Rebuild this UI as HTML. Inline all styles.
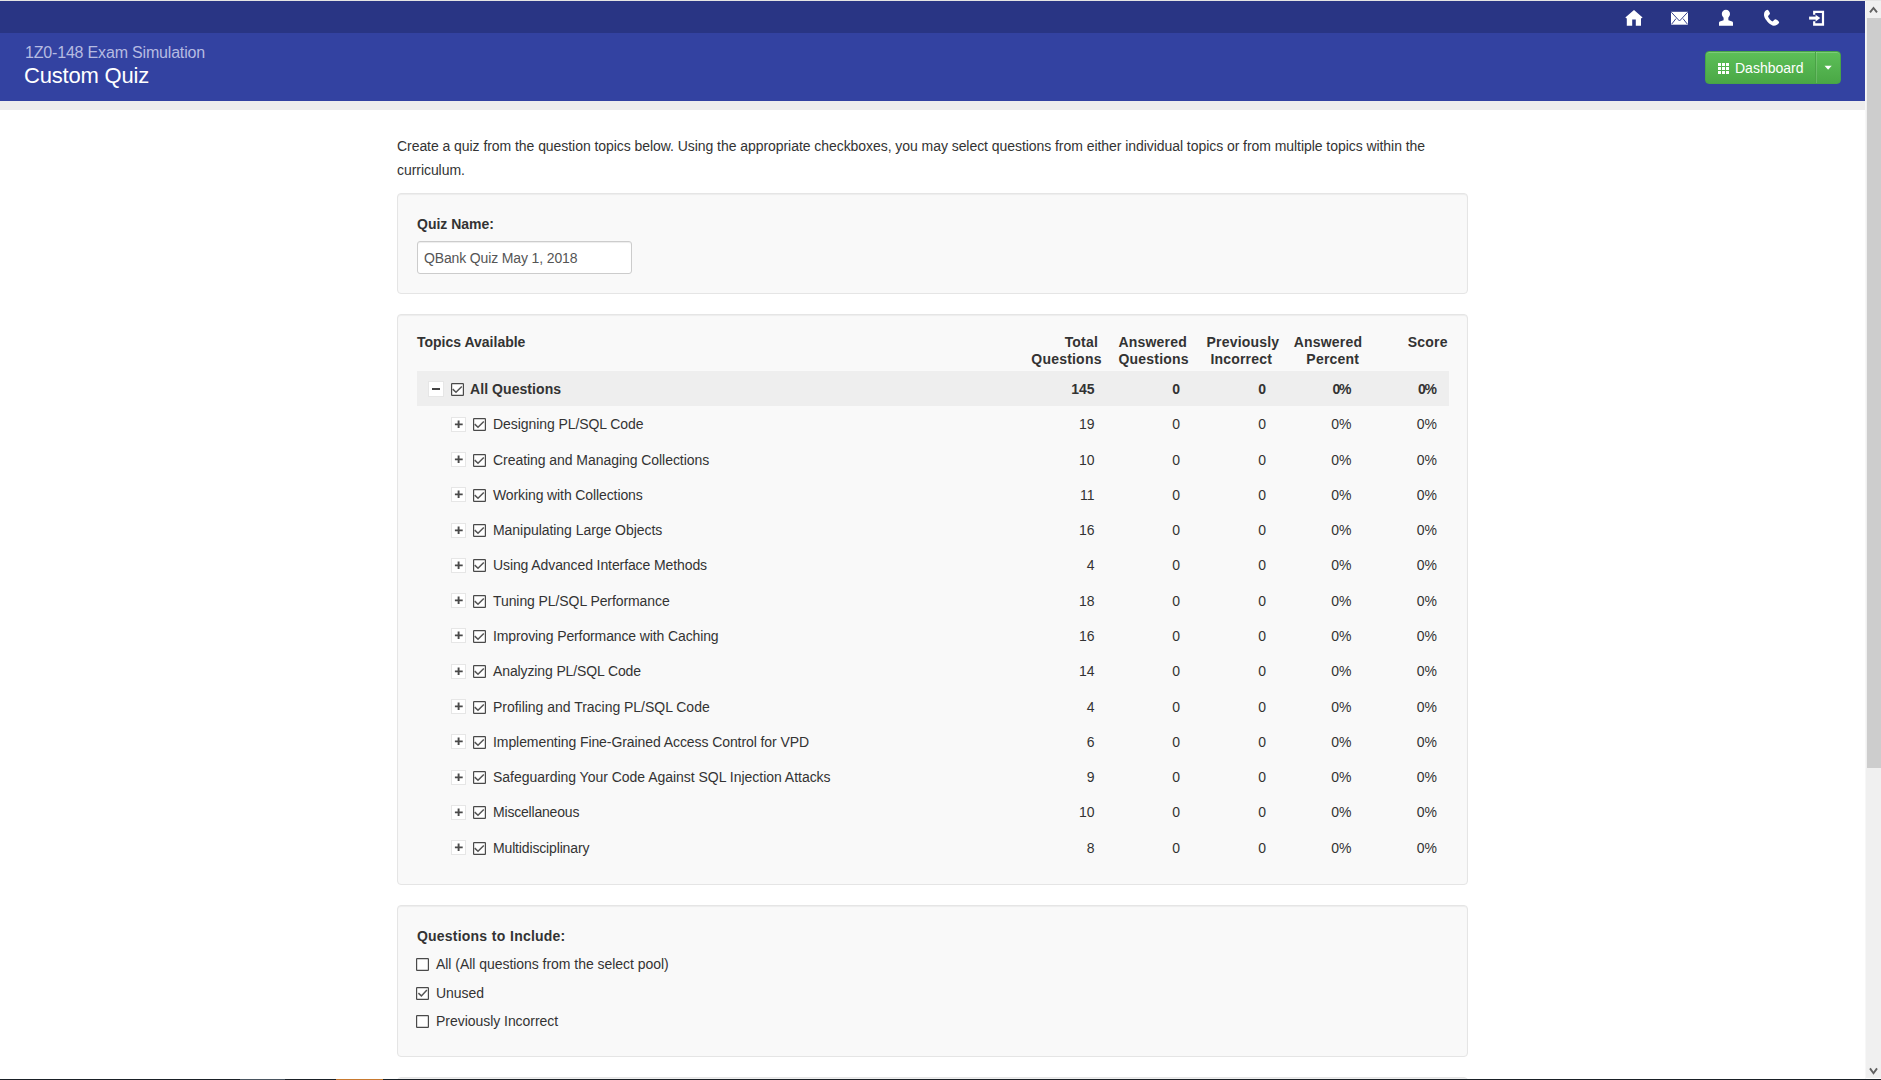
<!DOCTYPE html>
<html><head><meta charset="utf-8"><title>Custom Quiz</title>
<style>
html,body{margin:0;padding:0;}
body{width:1881px;height:1080px;overflow:hidden;position:relative;background:#fff;font-family:"Liberation Sans", sans-serif;}
.t{position:absolute;white-space:nowrap;line-height:normal;}
.well{position:absolute;left:397px;width:1069px;background:#f9f9f9;border:1px solid #e5e5e5;border-radius:4px;box-shadow:inset 0 1px 1px rgba(0,0,0,.05);}
.tog{position:absolute;background:#fff;border:1px solid #e6e6e6;}
svg{display:block}
</style></head><body>
<div style="position:absolute;left:0;top:0;width:1881px;height:1px;background:#e4e4e4"></div>
<div style="position:absolute;left:0;top:1px;width:1865px;height:32px;background:#293584"></div>
<div style="position:absolute;left:0;top:33px;width:1865px;height:68px;background:#3342a1"></div>
<div style="position:absolute;left:0;top:101px;width:1865px;height:9px;background:#ededed"></div>
<div class="t" style="left:25px;top:44px;font-size:16px;color:#b6bbe1;letter-spacing:-0.18px">1Z0-148 Exam Simulation</div>
<div class="t" style="left:24px;top:63px;font-size:22px;color:#fff;letter-spacing:-0.2px">Custom Quiz</div>

<svg style="position:absolute;left:0;top:0" width="1865" height="33">
 <g fill="#fff">
  <path d="M1625.3 17.4 L1634 10 L1642.6 17.4 L1641 18.4 L1641 25.8 L1635.8 25.8 L1635.8 19.4 L1632.2 19.4 L1632.2 25.8 L1626.8 25.8 L1626.8 18.4 Z"/>
  <rect x="1671" y="11.8" width="17" height="12.9"/>
 </g>
 <g fill="none" stroke="#3a4592" stroke-width="1">
  <path d="M1671.3 12.2 L1679.5 21 L1687.7 12.2"/>
  <path d="M1671.5 24.3 L1676 18.6 M1687.5 24.3 L1683 18.6"/>
 </g>
 <g fill="#fff">
  <ellipse cx="1725.9" cy="14" rx="4.1" ry="4.2"/>
  <path d="M1723.6 17 L1728.3 17 L1728.4 20.2 L1732.2 21.6 Q1733 22 1733 23 L1733 25.7 L1719 25.7 L1719 23 Q1719 22 1719.8 21.6 L1723.6 20.2 Z"/>
 </g>
 <path fill="#fff" d="M1767.3 9.7 C1768.5 10 1769.8 12.2 1770 13.6 C1769.6 14.6 1768.6 15.5 1768 16.2 C1768.6 18 1770.5 20.5 1772.4 21.6 C1773.3 20.8 1774.5 19.6 1775.5 19.3 C1777 19.6 1779 21.2 1779.2 22.4 C1778.5 24 1776 25.8 1773.8 25.8 C1770.5 25.4 1766.5 21.5 1764.6 17.6 C1763.6 15 1763.9 12.5 1765.2 11 C1765.9 10.3 1766.6 9.7 1767.3 9.7 Z"/>
 <g fill="#fff">
  <rect x="1809.1" y="16.6" width="7" height="3"/>
  <path d="M1815.6 14.8 L1820.3 18.1 L1815.6 21.4 Z"/>
  <path d="M1813.1 10.8 L1824.1 10.8 L1824.1 25.7 L1813.1 25.7 L1813.1 21.3 L1815.3 21.3 L1815.3 23.3 L1821.9 23.3 L1821.9 13.1 L1815.3 13.1 L1815.3 14.7 L1813.1 14.7 Z"/>
 </g>
</svg>
<div style="position:absolute;left:1705px;top:51px;width:134px;height:31px;border:1px solid #47a447;border-radius:4px;background:linear-gradient(#5dbf58,#4aa846);box-shadow:inset 0 1px 0 rgba(255,255,255,.2)"></div>
<div style="position:absolute;left:1815px;top:52px;width:1px;height:31px;background:#4aa246"></div>
<div style="position:absolute;left:1816px;top:52px;width:1px;height:31px;background:rgba(255,255,255,.15)"></div>
<svg style="position:absolute;left:1718px;top:63px" width="11" height="11"><g fill="#fff">
<rect x="0" y="0" width="3" height="3"/><rect x="4" y="0" width="3" height="3"/><rect x="8" y="0" width="3" height="3"/>
<rect x="0" y="4" width="3" height="3"/><rect x="4" y="4" width="3" height="3"/><rect x="8" y="4" width="3" height="3"/>
<rect x="0" y="8" width="3" height="3"/><rect x="4" y="8" width="3" height="3"/><rect x="8" y="8" width="3" height="3"/>
</g></svg>
<svg style="position:absolute;left:1824px;top:65px" width="9" height="6"><path d="M0.5 0.8 L7.7 0.8 L4.1 4.8 Z" fill="#fff"/></svg>
<div class="t" style="left:1735px;top:60px;font-size:14px;color:#fff;">Dashboard</div>
<div style="position:absolute;left:1865px;top:1px;width:1px;height:1078px;background:#f7f7f7"></div>
<div style="position:absolute;left:1866px;top:1px;width:15px;height:1077px;background:#f0f0f0"></div>
<div style="position:absolute;left:1867px;top:18px;width:14px;height:750px;background:#cdcdcd"></div>
<svg style="position:absolute;left:1866px;top:1px" width="15" height="1078">
 <path d="M4 11.4 L7.5 7 L11 11.4" fill="none" stroke="#606060" stroke-width="1.9"/>
 <path d="M4 1067.4 L7.5 1072.2 L11 1067.4" fill="none" stroke="#606060" stroke-width="1.9"/>
</svg>
<div class="t" style="white-space:normal;letter-spacing:-0.055px;left:397px;top:134px;width:1071px;font-size:14px;line-height:24px;color:#333">Create a quiz from the question topics below. Using the appropriate checkboxes, you may select questions from either individual topics or from multiple topics within the curriculum.</div>
<div class="well" style="top:193px;height:99px"></div>
<div class="t" style="left:417px;top:216px;font-size:14px;font-weight:bold;color:#333;">Quiz Name:</div>
<div style="position:absolute;left:417px;top:241px;width:213px;height:31px;border:1px solid #ccc;border-radius:3px;background:#fff;box-shadow:inset 0 1px 1px rgba(0,0,0,.075)"></div>
<div class="t" style="left:424px;top:250px;font-size:14px;color:#555;letter-spacing:-0.14px">QBank Quiz May 1, 2018</div>
<div class="well" style="top:314px;height:569px"></div>
<div class="t" style="left:417px;top:334px;font-size:14px;font-weight:bold;color:#333;">Topics Available</div>
<div class="t" style="left:981.3499999999999px;width:200px;text-align:center;top:334px;font-size:14px;font-weight:bold;color:#333;letter-spacing:0.2px">Total</div>
<div class="t" style="left:1052.6499999999999px;width:200px;text-align:center;top:334px;font-size:14px;font-weight:bold;color:#333;letter-spacing:0.2px">Answered</div>
<div class="t" style="left:1142.9499999999998px;width:200px;text-align:center;top:334px;font-size:14px;font-weight:bold;color:#333;letter-spacing:0.2px">Previously</div>
<div class="t" style="left:1227.9499999999998px;width:200px;text-align:center;top:334px;font-size:14px;font-weight:bold;color:#333;letter-spacing:0.2px">Answered</div>
<div class="t" style="left:1327.8px;width:200px;text-align:center;top:334px;font-size:14px;font-weight:bold;color:#333;letter-spacing:0.2px">Score</div>
<div class="t" style="left:966.5px;width:200px;text-align:center;top:351px;font-size:14px;font-weight:bold;color:#333;letter-spacing:0.2px">Questions</div>
<div class="t" style="left:1053.6px;width:200px;text-align:center;top:351px;font-size:14px;font-weight:bold;color:#333;letter-spacing:0.2px">Questions</div>
<div class="t" style="left:1141.25px;width:200px;text-align:center;top:351px;font-size:14px;font-weight:bold;color:#333;letter-spacing:0.2px">Incorrect</div>
<div class="t" style="left:1232.75px;width:200px;text-align:center;top:351px;font-size:14px;font-weight:bold;color:#333;letter-spacing:0.2px">Percent</div>
<div style="position:absolute;left:417px;top:371px;width:1032px;height:35px;background:#eeeeee"></div>
<div class="tog" style="left:428px;top:381px;width:14px;height:14px"><div style="position:absolute;left:3px;top:6px;width:8px;height:2px;background:#444"></div></div>
<div style="position:absolute;left:451px;top:383px"><svg width="13" height="13" viewBox="0 0 13 13"><rect x="0.6" y="0.6" width="11.8" height="11.8" rx="0.5" fill="#fff" stroke="#4a4a4a" stroke-width="1.2"/><path d="M1.7 6.1 L5 9.3 L10.8 3.5" fill="none" stroke="#555" stroke-width="1.5"/></svg></div>
<div class="t" style="left:470px;top:381px;font-size:14px;font-weight:bold;color:#333;letter-spacing:0.07px">All Questions</div>
<div class="t" style="left:894.5px;width:200px;text-align:right;top:381px;font-size:14px;font-weight:bold;color:#333">145</div>
<div class="t" style="left:980px;width:200px;text-align:right;top:381px;font-size:14px;font-weight:bold;color:#333">0</div>
<div class="t" style="left:1066px;width:200px;text-align:right;top:381px;font-size:14px;font-weight:bold;color:#333">0</div>
<div class="t" style="left:1151.5px;width:200px;text-align:right;top:381px;font-size:14px;font-weight:bold;color:#333"><span style="letter-spacing:-1.3px">0</span>%</div>
<div class="t" style="left:1237px;width:200px;text-align:right;top:381px;font-size:14px;font-weight:bold;color:#333"><span style="letter-spacing:-1.3px">0</span>%</div>
<div class="tog" style="left:451px;top:417px;width:13px;height:13px"><svg style="position:absolute;left:0;top:0" width="13" height="13"><path d="M2.9 6.4 H10.7 M6.6 2.4 V9.9" fill="none" stroke="#4a4a4a" stroke-width="1.9"/></svg></div>
<div style="position:absolute;left:473px;top:418px"><svg width="13" height="13" viewBox="0 0 13 13"><rect x="0.6" y="0.6" width="11.8" height="11.8" rx="0.5" fill="#fff" stroke="#4a4a4a" stroke-width="1.2"/><path d="M1.7 6.1 L5 9.3 L10.8 3.5" fill="none" stroke="#555" stroke-width="1.5"/></svg></div>
<div class="t" style="left:493px;top:416px;font-size:14px;color:#333;letter-spacing:-0.075px">Designing PL/SQL Code</div>
<div class="t" style="left:894.5px;width:200px;text-align:right;top:416px;font-size:14px;color:#333">19</div>
<div class="t" style="left:980px;width:200px;text-align:right;top:416px;font-size:14px;color:#333">0</div>
<div class="t" style="left:1066px;width:200px;text-align:right;top:416px;font-size:14px;color:#333">0</div>
<div class="t" style="left:1151.5px;width:200px;text-align:right;top:416px;font-size:14px;color:#333">0%</div>
<div class="t" style="left:1237px;width:200px;text-align:right;top:416px;font-size:14px;color:#333">0%</div>
<div class="tog" style="left:451px;top:452px;width:13px;height:13px"><svg style="position:absolute;left:0;top:0" width="13" height="13"><path d="M2.9 6.4 H10.7 M6.6 2.4 V9.9" fill="none" stroke="#4a4a4a" stroke-width="1.9"/></svg></div>
<div style="position:absolute;left:473px;top:454px"><svg width="13" height="13" viewBox="0 0 13 13"><rect x="0.6" y="0.6" width="11.8" height="11.8" rx="0.5" fill="#fff" stroke="#4a4a4a" stroke-width="1.2"/><path d="M1.7 6.1 L5 9.3 L10.8 3.5" fill="none" stroke="#555" stroke-width="1.5"/></svg></div>
<div class="t" style="left:493px;top:452px;font-size:14px;color:#333;letter-spacing:-0.053px">Creating and Managing Collections</div>
<div class="t" style="left:894.5px;width:200px;text-align:right;top:452px;font-size:14px;color:#333">10</div>
<div class="t" style="left:980px;width:200px;text-align:right;top:452px;font-size:14px;color:#333">0</div>
<div class="t" style="left:1066px;width:200px;text-align:right;top:452px;font-size:14px;color:#333">0</div>
<div class="t" style="left:1151.5px;width:200px;text-align:right;top:452px;font-size:14px;color:#333">0%</div>
<div class="t" style="left:1237px;width:200px;text-align:right;top:452px;font-size:14px;color:#333">0%</div>
<div class="tog" style="left:451px;top:487px;width:13px;height:13px"><svg style="position:absolute;left:0;top:0" width="13" height="13"><path d="M2.9 6.4 H10.7 M6.6 2.4 V9.9" fill="none" stroke="#4a4a4a" stroke-width="1.9"/></svg></div>
<div style="position:absolute;left:473px;top:489px"><svg width="13" height="13" viewBox="0 0 13 13"><rect x="0.6" y="0.6" width="11.8" height="11.8" rx="0.5" fill="#fff" stroke="#4a4a4a" stroke-width="1.2"/><path d="M1.7 6.1 L5 9.3 L10.8 3.5" fill="none" stroke="#555" stroke-width="1.5"/></svg></div>
<div class="t" style="left:493px;top:487px;font-size:14px;color:#333;letter-spacing:-0.109px">Working with Collections</div>
<div class="t" style="left:894.5px;width:200px;text-align:right;top:487px;font-size:14px;color:#333">11</div>
<div class="t" style="left:980px;width:200px;text-align:right;top:487px;font-size:14px;color:#333">0</div>
<div class="t" style="left:1066px;width:200px;text-align:right;top:487px;font-size:14px;color:#333">0</div>
<div class="t" style="left:1151.5px;width:200px;text-align:right;top:487px;font-size:14px;color:#333">0%</div>
<div class="t" style="left:1237px;width:200px;text-align:right;top:487px;font-size:14px;color:#333">0%</div>
<div class="tog" style="left:451px;top:523px;width:13px;height:13px"><svg style="position:absolute;left:0;top:0" width="13" height="13"><path d="M2.9 6.4 H10.7 M6.6 2.4 V9.9" fill="none" stroke="#4a4a4a" stroke-width="1.9"/></svg></div>
<div style="position:absolute;left:473px;top:524px"><svg width="13" height="13" viewBox="0 0 13 13"><rect x="0.6" y="0.6" width="11.8" height="11.8" rx="0.5" fill="#fff" stroke="#4a4a4a" stroke-width="1.2"/><path d="M1.7 6.1 L5 9.3 L10.8 3.5" fill="none" stroke="#555" stroke-width="1.5"/></svg></div>
<div class="t" style="left:493px;top:522px;font-size:14px;color:#333;letter-spacing:-0.048px">Manipulating Large Objects</div>
<div class="t" style="left:894.5px;width:200px;text-align:right;top:522px;font-size:14px;color:#333">16</div>
<div class="t" style="left:980px;width:200px;text-align:right;top:522px;font-size:14px;color:#333">0</div>
<div class="t" style="left:1066px;width:200px;text-align:right;top:522px;font-size:14px;color:#333">0</div>
<div class="t" style="left:1151.5px;width:200px;text-align:right;top:522px;font-size:14px;color:#333">0%</div>
<div class="t" style="left:1237px;width:200px;text-align:right;top:522px;font-size:14px;color:#333">0%</div>
<div class="tog" style="left:451px;top:558px;width:13px;height:13px"><svg style="position:absolute;left:0;top:0" width="13" height="13"><path d="M2.9 6.4 H10.7 M6.6 2.4 V9.9" fill="none" stroke="#4a4a4a" stroke-width="1.9"/></svg></div>
<div style="position:absolute;left:473px;top:559px"><svg width="13" height="13" viewBox="0 0 13 13"><rect x="0.6" y="0.6" width="11.8" height="11.8" rx="0.5" fill="#fff" stroke="#4a4a4a" stroke-width="1.2"/><path d="M1.7 6.1 L5 9.3 L10.8 3.5" fill="none" stroke="#555" stroke-width="1.5"/></svg></div>
<div class="t" style="left:493px;top:557px;font-size:14px;color:#333;letter-spacing:-0.097px">Using Advanced Interface Methods</div>
<div class="t" style="left:894.5px;width:200px;text-align:right;top:557px;font-size:14px;color:#333">4</div>
<div class="t" style="left:980px;width:200px;text-align:right;top:557px;font-size:14px;color:#333">0</div>
<div class="t" style="left:1066px;width:200px;text-align:right;top:557px;font-size:14px;color:#333">0</div>
<div class="t" style="left:1151.5px;width:200px;text-align:right;top:557px;font-size:14px;color:#333">0%</div>
<div class="t" style="left:1237px;width:200px;text-align:right;top:557px;font-size:14px;color:#333">0%</div>
<div class="tog" style="left:451px;top:593px;width:13px;height:13px"><svg style="position:absolute;left:0;top:0" width="13" height="13"><path d="M2.9 6.4 H10.7 M6.6 2.4 V9.9" fill="none" stroke="#4a4a4a" stroke-width="1.9"/></svg></div>
<div style="position:absolute;left:473px;top:595px"><svg width="13" height="13" viewBox="0 0 13 13"><rect x="0.6" y="0.6" width="11.8" height="11.8" rx="0.5" fill="#fff" stroke="#4a4a4a" stroke-width="1.2"/><path d="M1.7 6.1 L5 9.3 L10.8 3.5" fill="none" stroke="#555" stroke-width="1.5"/></svg></div>
<div class="t" style="left:493px;top:593px;font-size:14px;color:#333;letter-spacing:-0.083px">Tuning PL/SQL Performance</div>
<div class="t" style="left:894.5px;width:200px;text-align:right;top:593px;font-size:14px;color:#333">18</div>
<div class="t" style="left:980px;width:200px;text-align:right;top:593px;font-size:14px;color:#333">0</div>
<div class="t" style="left:1066px;width:200px;text-align:right;top:593px;font-size:14px;color:#333">0</div>
<div class="t" style="left:1151.5px;width:200px;text-align:right;top:593px;font-size:14px;color:#333">0%</div>
<div class="t" style="left:1237px;width:200px;text-align:right;top:593px;font-size:14px;color:#333">0%</div>
<div class="tog" style="left:451px;top:628px;width:13px;height:13px"><svg style="position:absolute;left:0;top:0" width="13" height="13"><path d="M2.9 6.4 H10.7 M6.6 2.4 V9.9" fill="none" stroke="#4a4a4a" stroke-width="1.9"/></svg></div>
<div style="position:absolute;left:473px;top:630px"><svg width="13" height="13" viewBox="0 0 13 13"><rect x="0.6" y="0.6" width="11.8" height="11.8" rx="0.5" fill="#fff" stroke="#4a4a4a" stroke-width="1.2"/><path d="M1.7 6.1 L5 9.3 L10.8 3.5" fill="none" stroke="#555" stroke-width="1.5"/></svg></div>
<div class="t" style="left:493px;top:628px;font-size:14px;color:#333;letter-spacing:-0.118px">Improving Performance with Caching</div>
<div class="t" style="left:894.5px;width:200px;text-align:right;top:628px;font-size:14px;color:#333">16</div>
<div class="t" style="left:980px;width:200px;text-align:right;top:628px;font-size:14px;color:#333">0</div>
<div class="t" style="left:1066px;width:200px;text-align:right;top:628px;font-size:14px;color:#333">0</div>
<div class="t" style="left:1151.5px;width:200px;text-align:right;top:628px;font-size:14px;color:#333">0%</div>
<div class="t" style="left:1237px;width:200px;text-align:right;top:628px;font-size:14px;color:#333">0%</div>
<div class="tog" style="left:451px;top:664px;width:13px;height:13px"><svg style="position:absolute;left:0;top:0" width="13" height="13"><path d="M2.9 6.4 H10.7 M6.6 2.4 V9.9" fill="none" stroke="#4a4a4a" stroke-width="1.9"/></svg></div>
<div style="position:absolute;left:473px;top:665px"><svg width="13" height="13" viewBox="0 0 13 13"><rect x="0.6" y="0.6" width="11.8" height="11.8" rx="0.5" fill="#fff" stroke="#4a4a4a" stroke-width="1.2"/><path d="M1.7 6.1 L5 9.3 L10.8 3.5" fill="none" stroke="#555" stroke-width="1.5"/></svg></div>
<div class="t" style="left:493px;top:663px;font-size:14px;color:#333;letter-spacing:-0.12px">Analyzing PL/SQL Code</div>
<div class="t" style="left:894.5px;width:200px;text-align:right;top:663px;font-size:14px;color:#333">14</div>
<div class="t" style="left:980px;width:200px;text-align:right;top:663px;font-size:14px;color:#333">0</div>
<div class="t" style="left:1066px;width:200px;text-align:right;top:663px;font-size:14px;color:#333">0</div>
<div class="t" style="left:1151.5px;width:200px;text-align:right;top:663px;font-size:14px;color:#333">0%</div>
<div class="t" style="left:1237px;width:200px;text-align:right;top:663px;font-size:14px;color:#333">0%</div>
<div class="tog" style="left:451px;top:699px;width:13px;height:13px"><svg style="position:absolute;left:0;top:0" width="13" height="13"><path d="M2.9 6.4 H10.7 M6.6 2.4 V9.9" fill="none" stroke="#4a4a4a" stroke-width="1.9"/></svg></div>
<div style="position:absolute;left:473px;top:701px"><svg width="13" height="13" viewBox="0 0 13 13"><rect x="0.6" y="0.6" width="11.8" height="11.8" rx="0.5" fill="#fff" stroke="#4a4a4a" stroke-width="1.2"/><path d="M1.7 6.1 L5 9.3 L10.8 3.5" fill="none" stroke="#555" stroke-width="1.5"/></svg></div>
<div class="t" style="left:493px;top:699px;font-size:14px;color:#333;letter-spacing:-0.022px">Profiling and Tracing PL/SQL Code</div>
<div class="t" style="left:894.5px;width:200px;text-align:right;top:699px;font-size:14px;color:#333">4</div>
<div class="t" style="left:980px;width:200px;text-align:right;top:699px;font-size:14px;color:#333">0</div>
<div class="t" style="left:1066px;width:200px;text-align:right;top:699px;font-size:14px;color:#333">0</div>
<div class="t" style="left:1151.5px;width:200px;text-align:right;top:699px;font-size:14px;color:#333">0%</div>
<div class="t" style="left:1237px;width:200px;text-align:right;top:699px;font-size:14px;color:#333">0%</div>
<div class="tog" style="left:451px;top:734px;width:13px;height:13px"><svg style="position:absolute;left:0;top:0" width="13" height="13"><path d="M2.9 6.4 H10.7 M6.6 2.4 V9.9" fill="none" stroke="#4a4a4a" stroke-width="1.9"/></svg></div>
<div style="position:absolute;left:473px;top:736px"><svg width="13" height="13" viewBox="0 0 13 13"><rect x="0.6" y="0.6" width="11.8" height="11.8" rx="0.5" fill="#fff" stroke="#4a4a4a" stroke-width="1.2"/><path d="M1.7 6.1 L5 9.3 L10.8 3.5" fill="none" stroke="#555" stroke-width="1.5"/></svg></div>
<div class="t" style="left:493px;top:734px;font-size:14px;color:#333;letter-spacing:-0.079px">Implementing Fine-Grained Access Control for VPD</div>
<div class="t" style="left:894.5px;width:200px;text-align:right;top:734px;font-size:14px;color:#333">6</div>
<div class="t" style="left:980px;width:200px;text-align:right;top:734px;font-size:14px;color:#333">0</div>
<div class="t" style="left:1066px;width:200px;text-align:right;top:734px;font-size:14px;color:#333">0</div>
<div class="t" style="left:1151.5px;width:200px;text-align:right;top:734px;font-size:14px;color:#333">0%</div>
<div class="t" style="left:1237px;width:200px;text-align:right;top:734px;font-size:14px;color:#333">0%</div>
<div class="tog" style="left:451px;top:770px;width:13px;height:13px"><svg style="position:absolute;left:0;top:0" width="13" height="13"><path d="M2.9 6.4 H10.7 M6.6 2.4 V9.9" fill="none" stroke="#4a4a4a" stroke-width="1.9"/></svg></div>
<div style="position:absolute;left:473px;top:771px"><svg width="13" height="13" viewBox="0 0 13 13"><rect x="0.6" y="0.6" width="11.8" height="11.8" rx="0.5" fill="#fff" stroke="#4a4a4a" stroke-width="1.2"/><path d="M1.7 6.1 L5 9.3 L10.8 3.5" fill="none" stroke="#555" stroke-width="1.5"/></svg></div>
<div class="t" style="left:493px;top:769px;font-size:14px;color:#333;letter-spacing:-0.024px">Safeguarding Your Code Against SQL Injection Attacks</div>
<div class="t" style="left:894.5px;width:200px;text-align:right;top:769px;font-size:14px;color:#333">9</div>
<div class="t" style="left:980px;width:200px;text-align:right;top:769px;font-size:14px;color:#333">0</div>
<div class="t" style="left:1066px;width:200px;text-align:right;top:769px;font-size:14px;color:#333">0</div>
<div class="t" style="left:1151.5px;width:200px;text-align:right;top:769px;font-size:14px;color:#333">0%</div>
<div class="t" style="left:1237px;width:200px;text-align:right;top:769px;font-size:14px;color:#333">0%</div>
<div class="tog" style="left:451px;top:805px;width:13px;height:13px"><svg style="position:absolute;left:0;top:0" width="13" height="13"><path d="M2.9 6.4 H10.7 M6.6 2.4 V9.9" fill="none" stroke="#4a4a4a" stroke-width="1.9"/></svg></div>
<div style="position:absolute;left:473px;top:806px"><svg width="13" height="13" viewBox="0 0 13 13"><rect x="0.6" y="0.6" width="11.8" height="11.8" rx="0.5" fill="#fff" stroke="#4a4a4a" stroke-width="1.2"/><path d="M1.7 6.1 L5 9.3 L10.8 3.5" fill="none" stroke="#555" stroke-width="1.5"/></svg></div>
<div class="t" style="left:493px;top:804px;font-size:14px;color:#333;letter-spacing:-0.192px">Miscellaneous</div>
<div class="t" style="left:894.5px;width:200px;text-align:right;top:804px;font-size:14px;color:#333">10</div>
<div class="t" style="left:980px;width:200px;text-align:right;top:804px;font-size:14px;color:#333">0</div>
<div class="t" style="left:1066px;width:200px;text-align:right;top:804px;font-size:14px;color:#333">0</div>
<div class="t" style="left:1151.5px;width:200px;text-align:right;top:804px;font-size:14px;color:#333">0%</div>
<div class="t" style="left:1237px;width:200px;text-align:right;top:804px;font-size:14px;color:#333">0%</div>
<div class="tog" style="left:451px;top:840px;width:13px;height:13px"><svg style="position:absolute;left:0;top:0" width="13" height="13"><path d="M2.9 6.4 H10.7 M6.6 2.4 V9.9" fill="none" stroke="#4a4a4a" stroke-width="1.9"/></svg></div>
<div style="position:absolute;left:473px;top:842px"><svg width="13" height="13" viewBox="0 0 13 13"><rect x="0.6" y="0.6" width="11.8" height="11.8" rx="0.5" fill="#fff" stroke="#4a4a4a" stroke-width="1.2"/><path d="M1.7 6.1 L5 9.3 L10.8 3.5" fill="none" stroke="#555" stroke-width="1.5"/></svg></div>
<div class="t" style="left:493px;top:840px;font-size:14px;color:#333;letter-spacing:-0.15px">Multidisciplinary</div>
<div class="t" style="left:894.5px;width:200px;text-align:right;top:840px;font-size:14px;color:#333">8</div>
<div class="t" style="left:980px;width:200px;text-align:right;top:840px;font-size:14px;color:#333">0</div>
<div class="t" style="left:1066px;width:200px;text-align:right;top:840px;font-size:14px;color:#333">0</div>
<div class="t" style="left:1151.5px;width:200px;text-align:right;top:840px;font-size:14px;color:#333">0%</div>
<div class="t" style="left:1237px;width:200px;text-align:right;top:840px;font-size:14px;color:#333">0%</div>
<div class="well" style="top:905px;height:150px"></div>
<div class="t" style="left:417px;top:928px;font-size:14px;font-weight:bold;color:#333;letter-spacing:0.2px;word-spacing:0.5px">Questions to Include:</div>
<div style="position:absolute;left:416px;top:958px"><svg width="13" height="13" viewBox="0 0 13 13"><rect x="0.6" y="0.6" width="11.8" height="11.8" rx="0.5" fill="#fff" stroke="#4a4a4a" stroke-width="1.2"/></svg></div>
<div class="t" style="left:436px;top:956px;font-size:14px;color:#333;letter-spacing:-0.04px">All (All questions from the select pool)</div>
<div style="position:absolute;left:416px;top:987px"><svg width="13" height="13" viewBox="0 0 13 13"><rect x="0.6" y="0.6" width="11.8" height="11.8" rx="0.5" fill="#fff" stroke="#4a4a4a" stroke-width="1.2"/><path d="M2.4 6.1 L5.4 8.9 L10.9 3.1" fill="none" stroke="#555" stroke-width="1.5"/></svg></div>
<div class="t" style="left:436px;top:985px;font-size:14px;color:#333;letter-spacing:-0.04px">Unused</div>
<div style="position:absolute;left:416px;top:1015px"><svg width="13" height="13" viewBox="0 0 13 13"><rect x="0.6" y="0.6" width="11.8" height="11.8" rx="0.5" fill="#fff" stroke="#4a4a4a" stroke-width="1.2"/></svg></div>
<div class="t" style="left:436px;top:1013px;font-size:14px;color:#333;letter-spacing:-0.04px">Previously Incorrect</div>
<div class="well" style="top:1077px;height:38px"></div>
<div style="position:absolute;left:0;top:1079px;width:1881px;height:1px;background:#1a2026"></div>
<div style="position:absolute;left:240px;top:1079px;width:45px;height:1px;background:#4a5560"></div>
<div style="position:absolute;left:336px;top:1079px;width:47px;height:1px;background:#c87a30"></div>
</body></html>
